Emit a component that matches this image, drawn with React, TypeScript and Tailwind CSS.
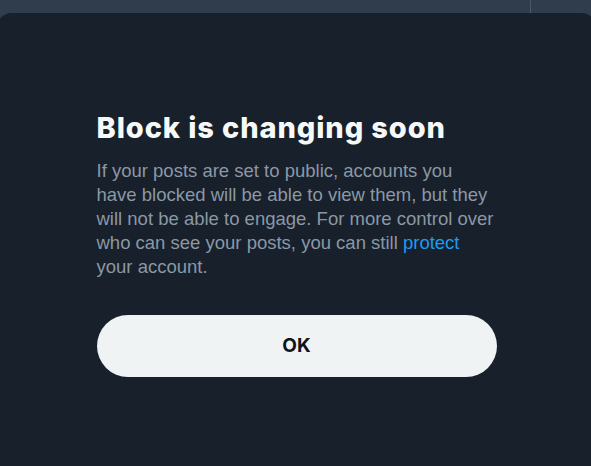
export default function App() {
  return (
    <div className="h-[466px] w-[591px] overflow-hidden bg-[#2f3d4c] font-['Liberation_Sans',sans-serif]">
      <div className="flex h-[13px] justify-end">
        <div className="mr-[60px] w-px bg-[#4a5867]" />
      </div>
      <div className="-mr-[6px] -ml-1 h-[453px] rounded-t-2xl bg-[#17202b]">
        <div className="mx-auto w-[400px] pt-[98px]">
          <h1 className="font-['Inter',sans-serif] text-[29px] leading-[34px] font-extrabold tracking-[0.9px] text-[#f7f9f9]">
            Block is changing soon
          </h1>
          <p className="mt-[14px] text-[18.5px] leading-[24px] text-[#8b98a5]">
            If your posts are set to public, accounts you have blocked will be
            able to view them, but they will not be able to engage. For more
            control over who can see your posts, you can still{' '}
            <a className="text-[#1d9bf0]" href="#">
              protect
            </a>{' '}
            your account.
          </p>
          <button className="mt-[36px] flex h-[62px] w-full items-center justify-center rounded-full bg-[#eff3f4] font-['Inter',sans-serif] text-[19px] font-bold text-[#0f1419]">
            OK
          </button>
        </div>
      </div>
    </div>
  );
}
